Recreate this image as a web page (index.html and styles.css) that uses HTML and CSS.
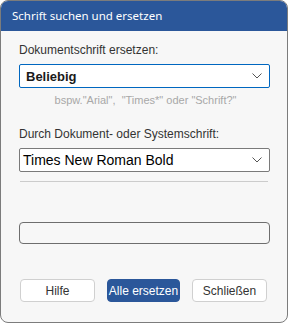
FILE: index.html
```html
<!DOCTYPE html>
<html lang="de">
<head>
    <meta charset="UTF-8">
    <title>Schrift suchen und ersetzen</title>
    <link rel="stylesheet" href="styles.css">
</head>
<body>
    <div class="dialog">
        <div class="title-bar">Schrift suchen und ersetzen</div>

        <div class="content">
            <label class="field-label">Dokumentschrift ersetzen:</label>
            <div class="select focused">
                <span class="select-text bold">Beliebig</span>
                <svg class="chevron" width="10" height="6" viewBox="0 0 10 6"><path d="M0.5 0.5 L5 5 L9.5 0.5" fill="none" stroke="#555" stroke-width="1"/></svg>
            </div>
            <div class="hint">bspw."Arial",&nbsp; "Times*" oder "Schrift?"</div>

            <label class="field-label second">Durch Dokument- oder Systemschrift:</label>
            <div class="select">
                <span class="select-text">Times New Roman Bold</span>
                <svg class="chevron" width="10" height="6" viewBox="0 0 10 6"><path d="M0.5 0.5 L5 5 L9.5 0.5" fill="none" stroke="#555" stroke-width="1"/></svg>
            </div>

            <div class="separator"></div>

            <div class="progress"></div>

            <div class="buttons">
                <button class="btn">Hilfe</button>
                <button class="btn primary">Alle ersetzen</button>
                <button class="btn">Schließen</button>
            </div>
        </div>
    </div>
</body>
</html>
```

FILE: styles.css
```css
body {
    margin: 0;
    padding: 0;
    background-color: #ffffff;
    font-family: "Liberation Sans", Arial, sans-serif;
}

.dialog {
    width: 288px;
    height: 323px;
    box-sizing: border-box;
    border: 1px solid #7c7c7c;
    border-radius: 8px;
    overflow: hidden;
    background-color: #f7f7f7;
    display: flex;
    flex-direction: column;
}

.title-bar {
    height: 30px;
    background-color: #2b579a;
    color: #ffffff;
    font-family: "Noto Sans", sans-serif;
    font-size: 11.5px;
    line-height: 30px;
    padding-left: 11px;
}

.content {
    padding: 12px 17px 0 18px;
    display: flex;
    flex-direction: column;
}

.field-label {
    font-size: 12px;
    color: #333333;
    line-height: 14px;
    margin-bottom: 7px;
}

.field-label.second {
    margin-top: 21px;
}

.select {
    height: 24px;
    box-sizing: border-box;
    border: 1px solid #7a7a7a;
    border-radius: 2px;
    background-color: #ffffff;
    display: flex;
    align-items: center;
    justify-content: space-between;
    padding: 0 7px 0 3px;
}

.select.focused {
    border-color: #0067c0;
    padding-left: 6px;
}

.select-text {
    font-size: 14px;
    color: #000000;
}

.select-text.bold {
    font-size: 13px;
    font-weight: bold;
    color: #1a1a1a;
}

.hint {
    font-size: 11px;
    color: #a8a8a8;
    text-align: center;
    margin-top: 6px;
    padding-left: 2px;
}

.separator {
    height: 1px;
    background-color: #cccccc;
    margin: 9px 2px 0 1px;
}

.progress {
    height: 22px;
    box-sizing: border-box;
    border: 1px solid #6e6e6e;
    border-radius: 4px;
    margin-top: 40px;
}

.buttons {
    display: flex;
    justify-content: space-between;
    margin-top: 35px;
    padding: 0 3px 0 1px;
}

.btn {
    width: 75px;
    height: 23px;
    box-sizing: border-box;
    border: 1px solid #d0d0d0;
    border-radius: 4px;
    background-color: #ffffff;
    color: #333333;
    font-family: "Liberation Sans", Arial, sans-serif;
    font-size: 12px;
    padding: 0;
}

.btn.primary {
    width: 73px;
    background-color: #2b579a;
    border-color: #2b579a;
    color: #ffffff;
}
```
